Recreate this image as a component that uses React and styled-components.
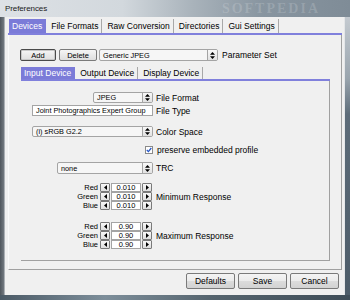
import styled, { createGlobalStyle } from "styled-components"

const GlobalStyle = createGlobalStyle`
  * { box-sizing: border-box; }
  html, body { margin: 0; padding: 0; background: #7d8a95; }
  body { font-family: "Liberation Sans", Arial, sans-serif; color: #000; }
`

const Window = styled.div`
  width: 350px;
  height: 300px;
  display: flex;
  flex-direction: column;
  overflow: hidden;
`

const TitleBar = styled.div`
  height: 17px;
  display: flex;
  align-items: center;
  padding-left: 5px;
  background: linear-gradient(90deg, #dde1e5 0%, #d2d8dd 35%, #a9b3bb 55%, #8895a0 75%, #7f8c97 100%);
  overflow: hidden;
`

const Title = styled.span`
  font-size: 8px;
  color: #1a1a1a;
  letter-spacing: -0.1px;
`

const Watermark = styled.span`
  margin-left: auto;
  margin-right: 30px;
  font-family: "Liberation Serif", serif;
  font-weight: bold;
  font-size: 14px;
  letter-spacing: 2px;
  color: rgba(255, 255, 255, 0.16);
`

const Middle = styled.div`
  flex: 1;
  display: flex;
`

const LeftEdge = styled.div`
  width: 5px;
  background: linear-gradient(90deg, #4f565d, #6e757c 70%, #c9cdd1);
`

const RightEdge = styled.div`
  width: 6px;
  border-left: 1px solid #e4e6e8;
  background: linear-gradient(180deg, #c4cad0 0%, #9aa5ae 22%, #5d6c79 35%, #4d5c69 100%);
`

const BottomEdge = styled.div`
  height: 5px;
  background: linear-gradient(90deg, #4b5a66, #7d8e9a 30%, #56656f 60%, #3f4d58);
`

const Client = styled.div`
  flex: 1;
  display: flex;
  flex-direction: column;
  background: #f0f0f0;
  padding-top: 2px;
`

const TabStrip = styled.div`
  display: flex;
  align-items: stretch;
  height: ${(p) => p.h}px;
  border-bottom: 2px solid #8080dc;
  margin: ${(p) => p.m};
  padding-left: ${(p) => p.pl}px;
`

const Tab = styled.div`
  display: flex;
  align-items: center;
  padding: 0 3px;
  margin-right: 2px;
  font-size: 8.5px;
  white-space: nowrap;
  color: ${(p) => (p.active ? "#fff" : "#000")};
  background: ${(p) => (p.active ? "#7b7bd8" : "transparent")};
  border-right: 1px solid ${(p) => (p.active ? "#7b7bd8" : "#a8a8a8")};
`

const OuterPanel = styled.div`
  flex: 1;
  margin: 0 2px 0 3px;
  border-right: 1px solid #a0a0a0;
  border-bottom: 1px solid #a0a0a0;
  border-left: 1px solid #fafafa;
  padding: 14px 11px 8px 11px;
  display: flex;
  flex-direction: column;
`

const Toolbar = styled.div`
  display: flex;
  align-items: center;
  height: 12px;
`

const SmallButton = styled.button`
  width: ${(p) => p.w}px;
  height: 12px;
  margin: 0 ${(p) => p.mr || 0}px 0 0;
  padding: 0;
  font-family: inherit;
  font-size: 7.5px;
  color: #000;
  border: 1px solid ${(p) => (p.primary ? "#4a4a4a" : "#7a7a7a")};
  box-shadow: ${(p) => (p.primary ? "inset 0 0 0 1px #c8c8c8" : "none")};
  border-radius: 2px;
  background: linear-gradient(#f5f5f5, #dedede);
`

const Combo = styled.div`
  width: ${(p) => p.w}px;
  height: ${(p) => p.h}px;
  display: flex;
  align-items: stretch;
  border: 1px solid #a4a4a4;
  border-radius: 2px;
  background: #f6f6f6;
`

const ComboText = styled.div`
  flex: 1;
  display: flex;
  align-items: center;
  padding-left: 3px;
  font-size: 7.3px;
  white-space: nowrap;
  overflow: hidden;
`

const ComboArrow = styled.div`
  width: 10px;
  display: flex;
  align-items: center;
  justify-content: center;
  border-left: 1px solid #a4a4a4;
  border-radius: 0 1px 1px 0;
  background: linear-gradient(#f8f8f8, #e2e2e2);
`

const Label = styled.span`
  font-size: 8.5px;
  margin-left: ${(p) => p.ml ?? 3}px;
  white-space: nowrap;
`

const InnerArea = styled.div`
  flex: 1;
  margin: 6px 0 0 1px;
  display: flex;
  flex-direction: column;
`

const InnerPanel = styled.div`
  flex: 1;
  border-right: 1px solid #a0a0a0;
  border-bottom: 1px solid #a0a0a0;
  padding-top: 11px;
  display: flex;
  flex-direction: column;
`

const Row = styled.div`
  display: flex;
  align-items: center;
  height: ${(p) => p.h}px;
  margin-top: ${(p) => p.mt || 0}px;
`

const FieldCell = styled.div`
  width: 132px;
  height: 100%;
  display: flex;
  justify-content: flex-end;
  align-items: center;
`

const TextInput = styled.div`
  width: ${(p) => p.w}px;
  height: 100%;
  display: flex;
  align-items: center;
  padding-left: 3px;
  border: 1px solid #a4a4a4;
  background: #fff;
  font-size: 7.3px;
  white-space: nowrap;
  overflow: hidden;
`

const CheckBox = styled.div`
  width: 8px;
  height: 8px;
  border: 1px solid #8a8a8a;
  background: #fff;
  display: flex;
  align-items: center;
  justify-content: center;
`

const Group = styled.div`
  display: flex;
  align-items: center;
  margin-top: ${(p) => p.mt}px;
`

const SpinList = styled.div`
  width: 132px;
  display: flex;
  flex-direction: column;
`

const SpinRow = styled.div`
  height: 9px;
  display: flex;
  align-items: stretch;
`

const SpinLabel = styled.div`
  width: 79px;
  padding-right: 2px;
  text-align: right;
  font-size: 7.5px;
  line-height: 9px;
`

const ArrowButton = styled.div`
  width: 10px;
  display: flex;
  align-items: center;
  justify-content: center;
  border: 1px solid #7a7a7a;
  border-radius: 1px;
  background: linear-gradient(#f8f8f8, #dedede);
`

const SpinValue = styled.div`
  width: 30px;
  margin: 0 1px;
  border: 1px solid #a4a4a4;
  background: #fff;
  font-size: 7.5px;
  line-height: 7px;
  text-align: center;
`

const Footer = styled.div`
  height: 25px;
  display: flex;
  justify-content: flex-end;
  align-items: flex-start;
  padding: 3px 5px 0 0;
  gap: 3px;
`

const DialogButton = styled.button`
  width: 49px;
  height: 16px;
  padding: 0;
  font-family: inherit;
  font-size: 8.5px;
  color: #000;
  border: 1px solid #7a7a7a;
  border-radius: 2px;
  background: linear-gradient(#f4f4f4 0%, #ebebeb 50%, #dcdcdc 51%, #d2d2d2 100%);
`

function UpDown() {
  return (
    <svg width="5" height="7" viewBox="0 0 5 7">
      <polygon points="2.5,0 5,2.8 0,2.8" fill="#000" />
      <polygon points="0,4.2 5,4.2 2.5,7" fill="#000" />
    </svg>
  )
}

function Tri({ dir }) {
  return (
    <svg width="3" height="5" viewBox="0 0 3 5">
      {dir === "left" ? (
        <polygon points="3,0 3,5 0,2.5" fill="#000" />
      ) : (
        <polygon points="0,0 3,2.5 0,5" fill="#000" />
      )}
    </svg>
  )
}

function Select({ w, h, value }) {
  return (
    <Combo w={w} h={h}>
      <ComboText>{value}</ComboText>
      <ComboArrow>
        <UpDown />
      </ComboArrow>
    </Combo>
  )
}

function SpinGroup({ values, label, mt }) {
  return (
    <Group mt={mt}>
      <SpinList>
        {["Red", "Green", "Blue"].map((name, i) => (
          <SpinRow key={name}>
            <SpinLabel>{name}</SpinLabel>
            <ArrowButton>
              <Tri dir="left" />
            </ArrowButton>
            <SpinValue>{values[i]}</SpinValue>
            <ArrowButton>
              <Tri dir="right" />
            </ArrowButton>
          </SpinRow>
        ))}
      </SpinList>
      <Label>{label}</Label>
    </Group>
  )
}

export default function App() {
  return (
    <Window>
      <GlobalStyle />
      <TitleBar>
        <Title>Preferences</Title>
        <Watermark>SOFTPEDIA</Watermark>
      </TitleBar>
      <Middle>
        <LeftEdge />
        <Client>
          <TabStrip h={16} m="0 2px 0 3px" pl={1}>
            <Tab active>Devices</Tab>
            <Tab>File Formats</Tab>
            <Tab>Raw Conversion</Tab>
            <Tab>Directories</Tab>
            <Tab>Gui Settings</Tab>
          </TabStrip>
          <OuterPanel>
            <Toolbar>
              <SmallButton w={36} mr={3} primary>Add</SmallButton>
              <SmallButton w={38} mr={2}>Delete</SmallButton>
              <Select w={119} h={12} value="Generic JPEG" />
              <Label ml={4}>Parameter Set</Label>
            </Toolbar>
            <InnerArea>
              <TabStrip h={14} m="0" pl={0}>
                <Tab active>Input Device</Tab>
                <Tab>Output Device</Tab>
                <Tab>Display Device</Tab>
              </TabStrip>
              <InnerPanel>
                <Row h={11}>
                  <FieldCell>
                    <Select w={60} h={11} value="JPEG" />
                  </FieldCell>
                  <Label>File Format</Label>
                </Row>
                <Row h={11} mt={2}>
                  <FieldCell>
                    <TextInput w={121}>Joint Photographics Expert Group</TextInput>
                  </FieldCell>
                  <Label>File Type</Label>
                </Row>
                <Row h={11} mt={10}>
                  <FieldCell>
                    <Select w={121} h={11} value="(i) sRGB G2.2" />
                  </FieldCell>
                  <Label>Color Space</Label>
                </Row>
                <Row h={9} mt={8}>
                  <FieldCell>
                    <CheckBox>
                      <svg width="6" height="6" viewBox="0 0 6 6">
                        <polyline points="0.8,3 2.4,4.6 5.3,1" fill="none" stroke="#2456c8" strokeWidth="1.3" />
                      </svg>
                    </CheckBox>
                  </FieldCell>
                  <Label ml={4}>preserve embedded profile</Label>
                </Row>
                <Row h={12} mt={8}>
                  <FieldCell>
                    <Select w={96} h={12} value="none" />
                  </FieldCell>
                  <Label>TRC</Label>
                </Row>
                <SpinGroup mt={9} values={["0.010", "0.010", "0.010"]} label="Minimum Response" />
                <SpinGroup mt={12} values={["0.90", "0.90", "0.90"]} label="Maximum Response" />
              </InnerPanel>
            </InnerArea>
          </OuterPanel>
          <Footer>
            <DialogButton>Defaults</DialogButton>
            <DialogButton>Save</DialogButton>
            <DialogButton>Cancel</DialogButton>
          </Footer>
        </Client>
        <RightEdge />
      </Middle>
      <BottomEdge />
    </Window>
  )
}
